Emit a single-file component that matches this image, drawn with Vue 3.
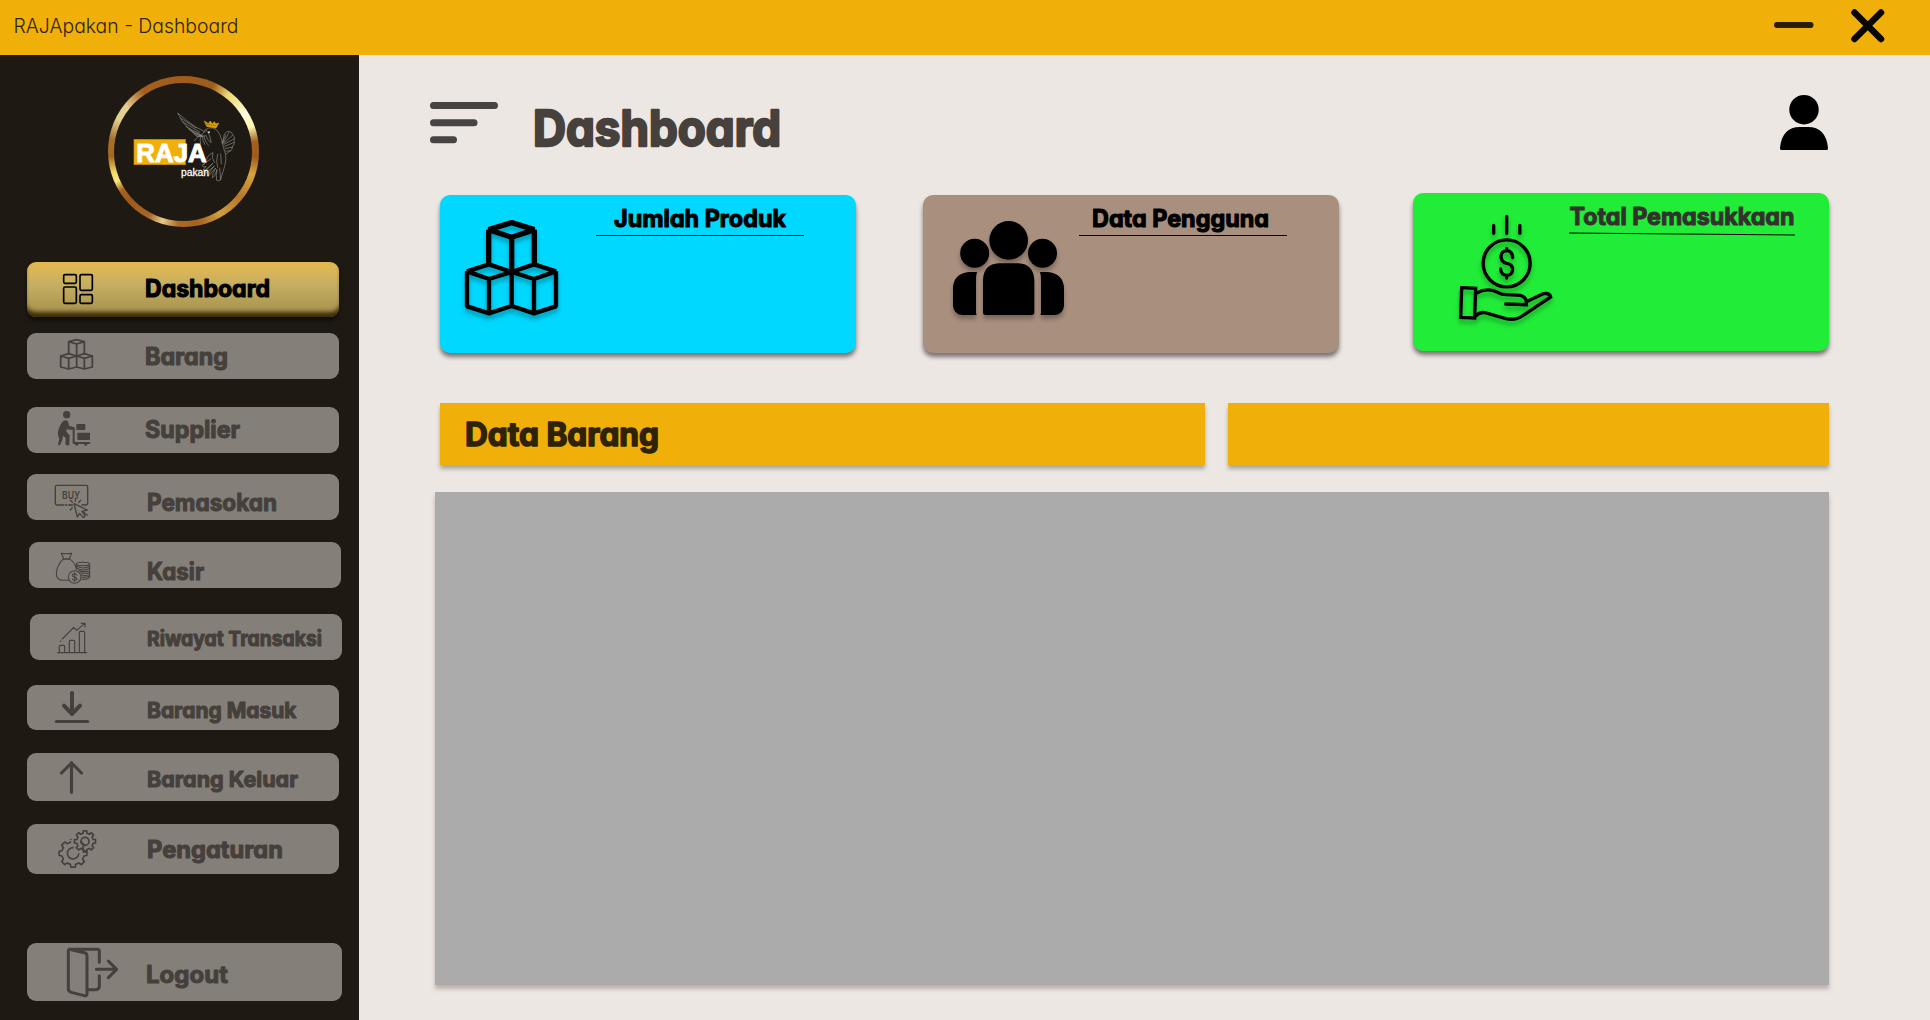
<script setup>
import { computed } from 'vue'

// gap: space above the button; box: icon view box (three units per pixel)
const items = [
  { id: 'dashboard', label: 'Dashboard', gap: 0, left: 27, w: 312, h: 55, box: '81 66 330 165', x: 8, y: 35, len: 125, fs: 24 },
  { id: 'barang', label: 'Barang', gap: 16, left: 27, w: 312, h: 46, box: '81 279 330 138', x: 8, y: 31.7, len: 83, fs: 24 },
  { id: 'supplier', label: 'Supplier', gap: 28, left: 27, w: 312, h: 46, box: '81 501 330 138', x: 8, y: 31, len: 95, fs: 24 },
  { id: 'pemasokan', label: 'Pemasokan', gap: 21, left: 27, w: 312, h: 46, box: '81 42 330 138', x: 10, y: 37, len: 130, fs: 24 },
  { id: 'kasir', label: 'Kasir', gap: 22, left: 29, w: 312, h: 46, box: '87 246 330 138', x: 8, y: 38, len: 57, fs: 24 },
  { id: 'riwayat', label: 'Riwayat Transaksi', gap: 26, left: 30, w: 312, h: 46, box: '90 462 330 138', x: 7, y: 32, len: 175, fs: 20.5 },
  { id: 'masuk', label: 'Barang Masuk', gap: 25, left: 27, w: 312, h: 45, box: '81 45 330 135', x: 10, y: 32.7, len: 149.5, fs: 22 },
  { id: 'keluar', label: 'Barang Keluar', gap: 23, left: 27, w: 312, h: 48, box: '81 249 330 144', x: 10, y: 33.7, len: 151, fs: 22 },
  { id: 'pengaturan', label: 'Pengaturan', gap: 23, left: 27, w: 312, h: 50, box: '81 462 330 150', x: 10, y: 33.7, len: 136, fs: 24 },
  { id: 'logout', label: 'Logout', gap: 69, left: 27, w: 315, h: 58, box: '81 189 330 174', x: 9, y: 40, len: 82, fs: 24 },
]

function gear(cx, cy, r, depth, teeth) {
  const pts = []
  const step = (Math.PI * 2) / teeth
  for (let i = 0; i < teeth; i++) {
    const a = i * step - Math.PI / 2
    for (const [off, rad] of [[-0.2, r], [0.2, r], [0.3, r - depth], [0.7, r - depth]]) {
      pts.push(`${(cx + Math.cos(a + off * step) * rad).toFixed(1)} ${(cy + Math.sin(a + off * step) * rad).toFixed(1)}`)
    }
  }
  return `M${pts.join('L')}Z`
}
const smallGear = computed(() => gear(255, 514, 32, 7, 8))
const bigGear = computed(() => gear(219, 550, 42, 8, 8))
</script>

<template>
  <div class="window">
    <header class="titlebar">
      <svg class="caption" width="260" height="55">
        <text x="13.500" y="33" textLength="225" lengthAdjust="spacingAndGlyphs">RAJApakan - Dashboard</text>
      </svg>
      <div class="controls">
        <svg class="minimize" width="40" height="8"><path d="M3 4H36.500" stroke="#291f06" stroke-width="6" stroke-linecap="round" /></svg>
        <svg width="34" height="34"><path d="M3.500 3.500L30 30M30 3.500L3.500 30" stroke="#080702" stroke-width="6.500" stroke-linecap="round" /></svg>
      </div>
    </header>

    <div class="body">
      <aside class="sidebar">
        <div class="logo">
          <div class="logo-face">
            <svg viewBox="343 247 414 412" width="138" height="138">
              <rect x="403" y="415" width="154" height="76" fill="#f1af0a" stroke="#c98f0b" stroke-width="2" />
              <g class="bird">
                <path d="M534 336Q560 360 588 378Q605 386 618 394M534 336Q546 364 566 382Q586 398 606 402M542 351L590 381M548 362L600 393M558 376Q576 388 600 397M566 384Q580 398 604 404M576 392Q590 405 610 406M584 399Q590 412 616 404" />
                <path d="M618 386Q626 378 640 381Q655 386 660 400Q666 414 668 427Q672 442 678 462Q680 472 676 492L662 538M618 386L606 402Q590 408 584 420M606 402Q598 414 603 430M609 404Q607 420 616 431M613 405Q615 422 627 434M618 402Q622 416 634 425Q633 412 628 400Q624 392 618 386" />
                <path d="M668 427L672 410Q672 394 687 391Q697 392 699 401Q705 404 704 417Q706 430 698 438Q698 448 690 451Q682 457 678 459M668 427L678 401M670 428L688 394M671 429L699 402M672 431L704 413M674 437L703 424M675 443L700 438M677 450L693 450" />
                <path d="M640 455Q624 460 612 492M634 473L608 492Q606 499 619 497Q609 503 612 511L640 487Q618 507 615 520L644 495Q626 516 626 526L648 501Q637 518 638 530Q645 529 652 505Q648 524 651 538Q658 542 663 536L660 500M640 455Q634 468 645 486M654 459Q648 482 654 500M663 457L665 490" />
              </g>
              <circle cx="628" cy="394" r="3" fill="#ddd" />
              <path d="M614 360L621 376L649 381L657 366L648 369L644 362L638 369L632 360L626 368Z" fill="#dba10b" stroke="#dba10b" stroke-width="2" />
              <path d="M620 370L649 374" stroke="#3a2c08" stroke-width="2" stroke-dasharray="4 3" />
              <text class="brand" x="410" y="483" textLength="211" lengthAdjust="spacingAndGlyphs">RAJA</text>
              <text class="brand-sub" x="544" y="524" textLength="84" lengthAdjust="spacingAndGlyphs">pakan</text>
            </svg>
          </div>
        </div>

        <nav>
          <button
            v-for="it in items"
            :key="it.id"
            :class="['item', { active: it.id === 'dashboard' }]"
            :style="{ marginTop: it.gap + 'px', marginLeft: it.left + 'px', width: it.w + 'px', height: it.h + 'px' }"
          >
            <svg class="icon" width="110" :height="it.h" :viewBox="it.box">
              <g v-if="it.id === 'dashboard'" stroke-width="5">
                <rect x="191" y="104" width="38" height="26" rx="4" /><rect x="240" y="104" width="37" height="47" rx="4" />
                <rect x="191" y="141" width="38" height="49" rx="4" /><rect x="240" y="164" width="37" height="26" rx="4" />
              </g>
              <g v-else-if="it.id === 'barang'" stroke-width="5.300">
                <path d="M206 305L230 299L253 305L230 312ZM206 305V341M253 305V341M230 312V348" />
                <path d="M206 341L182 348L206 355L230 348ZM182 348V381L206 387L230 381V348M206 355V387" />
                <path d="M253 341L230 348L253 355L277 348ZM230 381L253 387L277 381V348M253 355V387" />
              </g>
              <g v-else-if="it.id === 'supplier'" class="solid">
                <circle cx="200" cy="524" r="11" />
                <rect x="229" y="552" width="27" height="18" rx="3" /><rect x="232" y="578" width="38" height="22" rx="2" />
                <path d="M186 547Q191 540 199 541Q206 543 206 552L207 557L218 560Q225 562 223 567L220 570L200 568L199 575L209 586L208 613Q206 619 200 616L196 613L197 594L189 587L187 600L180 615Q176 619 174 612L178 598L174 586Q172 572 180 557Z" />
                <path class="line" d="M188 550Q196 542 203 549L199 560L190 564" stroke="#857f7a" stroke-width="2.500" />
                <path class="line" d="M209 564H221V609H268" stroke-width="6" />
                <circle cx="230" cy="613" r="4.500" /><circle cx="257" cy="613" r="4.500" />
              </g>
              <g v-else-if="it.id === 'pemasokan'" stroke-width="4">
                <path d="M192 135H171Q166 135 166 130V81Q166 76 171 76H258Q263 76 263 81V130Q263 135 256 135H246M197 135H201M207 135H210" />
                <text class="buy" x="186" y="117" textLength="54" lengthAdjust="spacingAndGlyphs">BUY</text>
                <path d="M222 131L232 171L239 160L249 172Q253 173 255 167L246 154L262 150ZM246 154L262 165M226 115V124M211 121L217 127M242 121L236 127M208 135H217M211 150L217 143" />
              </g>
              <g v-else-if="it.id === 'kasir'" stroke-width="3.200">
                <path d="M184 280Q199 283 215 280L208 296H191ZM191 296Q170 315 169 342Q170 361 190 361H204M208 296Q224 306 228 324M188 298H211" />
                <circle cx="224" cy="351" r="19" />
                <path d="M231 345Q229 341 224 341Q217 341 217 346Q218 351 224 351Q231 352 231 357Q230 361 224 361Q218 361 217 356M224 338V364" />
                <ellipse cx="249" cy="312" rx="20" ry="5" />
                <path d="M229 312V328M269 312V352Q265 359 246 358M230 319Q250 329 269 319M230 325Q250 335 269 325M236 332Q252 337 269 332M242 338Q256 341 269 338M244 345Q258 348 269 344M245 352Q259 353 269 349" />
              </g>
              <g v-else-if="it.id === 'riwayat'" stroke-width="3.500">
                <path d="M173 578H260M178 578V559Q178 556 181 556H191Q194 556 194 559V578M208 578V544Q208 541 211 541H221Q224 541 224 544V578M238 578V517Q238 514 241 514H251Q254 514 254 517V578" />
                <path d="M187 537L221 502L230 511L254 490M244 490H255V501M181 544L182 543" />
              </g>
              <g v-else-if="it.id === 'masuk'" stroke-width="12">
                <path d="M216 69V131M192 107L216 132L240 107" /><path d="M169 154.500H263" stroke-width="9" />
              </g>
              <path v-else-if="it.id === 'keluar'" d="M214.500 278V367M184.500 309L214.500 279L244.500 309" stroke-width="9.500" />
              <g v-else-if="it.id === 'pengaturan'" stroke-width="5">
                <path :d="smallGear" /><circle cx="255" cy="514" r="12" />
                <path :d="bigGear" stroke-dasharray="0 39 281 400" />
                <path d="M219 533A17 17 0 1 0 236 552" />
              </g>
              <g v-else stroke-width="9">
                <path d="M208 208L256 219Q261 221 261 227V342Q261 348 253 347L214 337Q205 334 205 328V213Q205 208 211 208H292Q298 208 298 214V247M298 287V319Q298 329 288 329H264" />
                <path d="M289 268H349M325 243L350 268L325 293" />
              </g>
            </svg>
            <svg class="label" :height="it.h">
              <text :x="it.x" :y="it.y" :font-size="it.fs" :textLength="it.len" lengthAdjust="spacingAndGlyphs">{{ it.label }}</text>
            </svg>
          </button>
        </nav>
      </aside>

      <main class="content">
        <div class="heading">
          <svg class="menu" width="70" height="44">
            <path d="M3.500 5.500H64.500M3.500 22.700H44M3.500 39.800H23.500" />
          </svg>
          <svg class="title" width="268" height="70">
            <text x="10" y="51" font-size="49" textLength="248" lengthAdjust="spacingAndGlyphs">Dashboard</text>
          </svg>
          <svg class="user" width="48" height="56">
            <circle cx="24" cy="14.700" r="14.700" />
            <path d="M1 55Q0 55 0 53Q2 32 20 32H28Q46 32 48 53Q48 55 47 55Z" />
          </svg>
        </div>

        <section class="cards">
          <article class="card cyan">
            <svg class="art" width="156" height="158" viewBox="120 345 468 474">
              <g class="stroke bevel" stroke-width="13">
                <path d="M266 449L335 428L403 449L335 472ZM266 449V552M403 449V552M335 472V577" stroke-width="16" />
                <path d="M267 553L201 574L267 597L335 576ZM201 574V679L267 700L335 678V576M267 597V700" />
                <path d="M402 553L335 576L402 597L468 574ZM335 678L402 700L468 679V574M402 597V700" />
              </g>
            </svg>
            <svg class="head" width="240" height="60">
              <text x="18" y="32" font-size="24" textLength="172" lengthAdjust="spacingAndGlyphs">Jumlah Produk</text>
              <path d="M0 40.500H208" />
            </svg>
          </article>
          <article class="card brown">
            <svg class="art" width="156" height="158" viewBox="69 45 468 474">
              <circle cx="326" cy="181" r="58" /><circle cx="224" cy="220" r="43.500" /><circle cx="427.500" cy="220" r="43.500" />
              <path d="M249 397V300Q251 252 296 250H356Q400 252 403 300V397Q403 405 395 405H257Q249 405 249 397Z" />
              <path d="M231 276H208Q162 280 159 322V377Q161 402 187 405H230Q228 403 228 397V300Q228 286 231 276Z" />
              <path d="M420 276H443Q488 280 492 322V377Q490 402 464 405H421Q423 403 423 397V300Q423 286 420 276Z" />
            </svg>
            <svg class="head" width="240" height="60">
              <text x="13" y="31.700" font-size="24" textLength="177" lengthAdjust="spacingAndGlyphs">Data Pengguna</text>
              <path d="M0 40.500H208" />
            </svg>
          </article>
          <article class="card green">
            <svg class="art" width="156" height="158" viewBox="69 39 468 474">
              <g class="stroke" stroke-width="10">
                <path d="M311 136V160M350 109V160M389.500 136V160" />
                <circle cx="350" cy="250" r="70.500" />
                <path d="M368 233Q367 212 350 212Q333 213 333 230Q334 247 350 250Q368 253 368 269Q366 286 350 286Q333 285 332 267M350 205V212M350 286V294" />
                <path d="M215 323L257 325L254 414L212 412ZM260 339Q290 322 321 336Q332 344 349 344L391 346Q408 351 409 365L460 341Q479 338 482 351L396 408Q378 422 347 416L285 398Q270 395 257 408M347 372L409 374V365" />
              </g>
            </svg>
            <svg class="head soft" width="240" height="60">
              <text x="0.500" y="31.700" font-size="24" textLength="225" lengthAdjust="spacingAndGlyphs">Total Pemasukkaan</text>
              <path d="M0 40L226 42" />
            </svg>
          </article>
        </section>

        <section class="bars">
          <div class="bar wide">
            <svg width="260" height="62">
              <text x="25" y="42.700" font-size="32" textLength="194" lengthAdjust="spacingAndGlyphs">Data Barang</text>
            </svg>
          </div>
          <div class="bar"></div>
        </section>
        <section class="panel"></section>
      </main>
    </div>
  </div>
</template>

<style>
body { margin: 0; }
</style>

<style scoped>
.window { width: 1930px; height: 1020px; display: flex; flex-direction: column; overflow: hidden; background: #ece7e3; font-family: Inter, "Noto Sans", sans-serif; }
svg { display: block; flex: none; overflow: visible; }
text { font-family: Inter, "Noto Sans", sans-serif; font-weight: 700; font-feature-settings: "cv11"; fill: currentColor; stroke: currentColor; stroke-width: 1.1px; stroke-linejoin: round; }
.titlebar { height: 55px; flex: none; display: flex; justify-content: space-between; align-items: center; background: #f1af0a; color: #2f2407; }
.caption text { font-size: 19.5px; font-weight: 300; stroke: none; }
.controls { display: flex; align-items: center; gap: 37px; padding: 0 45px 4px 0; }
.minimize { margin-bottom: 1.5px; }
.body { flex: 1; display: flex; min-height: 0; }
.sidebar { width: 359px; flex: none; background: #1e1a13; }
.logo { width: 151px; height: 151px; margin: 21px 0 35px 107.500px; border-radius: 50%; display: flex; align-items: center; justify-content: center; background: conic-gradient(#a05c1a 0deg, #a05c1a 24deg, #edd878 38deg, #f0e38c 45deg, #fffce0 58deg, #fbf5ad 70deg, #a5601c 82deg, #9e5b1c 94deg, #d9a33c 108deg, #b5782a 130deg, #cf9f3d 150deg, #a5631f 168deg, #ae6824 184deg, #e6cb8b 197deg, #a9652a 208deg, #9e5a1c 228deg, #a5641f 238deg, #f8e77a 246deg, #f1dc69 253deg, #a5681f 266deg, #a5702f 280deg, #e6cf8c 296deg, #e4cf92 308deg, #a5601f 326deg, #a05c1a 360deg); }
.logo-face { width: 138px; height: 138px; border-radius: 50%; background: #1e1a13; }
.bird { fill: none; stroke: #b5b4b1; stroke-width: 1.700; stroke-linejoin: round; opacity: 0.85; }
.brand { font: bold 80px "Liberation Sans", sans-serif; fill: #fff; stroke: #fff; stroke-width: 3px; }
.brand-sub { font: 35px "Liberation Sans", sans-serif; fill: #fff; stroke: #fff; stroke-width: 0.8px; }
nav { display: flex; flex-direction: column; align-items: flex-start; }
.item { flex: none; display: flex; padding: 0; border: 0; border-radius: 9px; background: #857f7a; color: #45403b; overflow: hidden; }
.item.active { color: #000; background: linear-gradient(#e3b750 0%, #dcb655 14%, #c4ae62 42%, #ab9650 86%, #a38b42 100%); box-shadow: inset 0 -7px 4px -2px rgba(42, 28, 0, 0.85), 0 4px 4px rgba(0, 0, 0, 0.45); }
.icon { fill: none; stroke: currentColor; stroke-linecap: round; stroke-linejoin: round; }
.solid { fill: currentColor; stroke: none; }
.line { fill: none; stroke: currentColor; }
.buy { font-size: 31px; font-weight: 600; stroke: none; }
.label { width: 200px; }
.content { flex: 1; min-width: 0; display: flex; flex-direction: column; }
.heading { height: 138px; flex: none; display: flex; align-items: flex-start; }
.menu { margin: 45px 0 0 71px; fill: none; stroke: #464544; stroke-width: 7; stroke-linecap: round; }
.title { margin: 40px 0 0 23px; color: #47413d; }
.title text { stroke-width: 2.4px; }
.user { margin: 40px 0 0 989px; }
.cards { height: 210px; flex: none; display: flex; padding-left: 81px; align-items: flex-start; }
.card { width: 416px; height: 158px; margin-top: 2px; border-radius: 10px; display: flex; box-shadow: 0 4px 4px rgba(55, 45, 50, 0.62); }
.cyan { background: #00d8ff; }
.brown { background: #a98f7e; margin-left: 67px; }
.green { background: #21ec38; margin-left: 74px; margin-top: 0; }
.art { filter: drop-shadow(0 4px 2px rgba(0, 0, 0, 0.28)); }
.stroke { fill: none; stroke: #000; stroke-linecap: round; }
.bevel { stroke-linejoin: bevel; stroke-linecap: butt; }
.head { color: #000; }
.head path { stroke: #000; stroke-width: 1; }
.head.soft { color: #33312e; }
.bars { display: flex; gap: 23px; padding-left: 81px; }
.bar { width: 601px; height: 62px; background: #f1af0a; color: #2f2305; box-shadow: 0 4px 4px rgba(0, 0, 0, 0.28); }
.bar.wide { width: 765px; }
.bar text { stroke-width: 1.5px; }
.panel { width: 1394px; height: 493px; margin: 27px 0 0 76px; background: #ababab; box-shadow: 0 4px 4px rgba(60, 35, 30, 0.28); }
</style>
